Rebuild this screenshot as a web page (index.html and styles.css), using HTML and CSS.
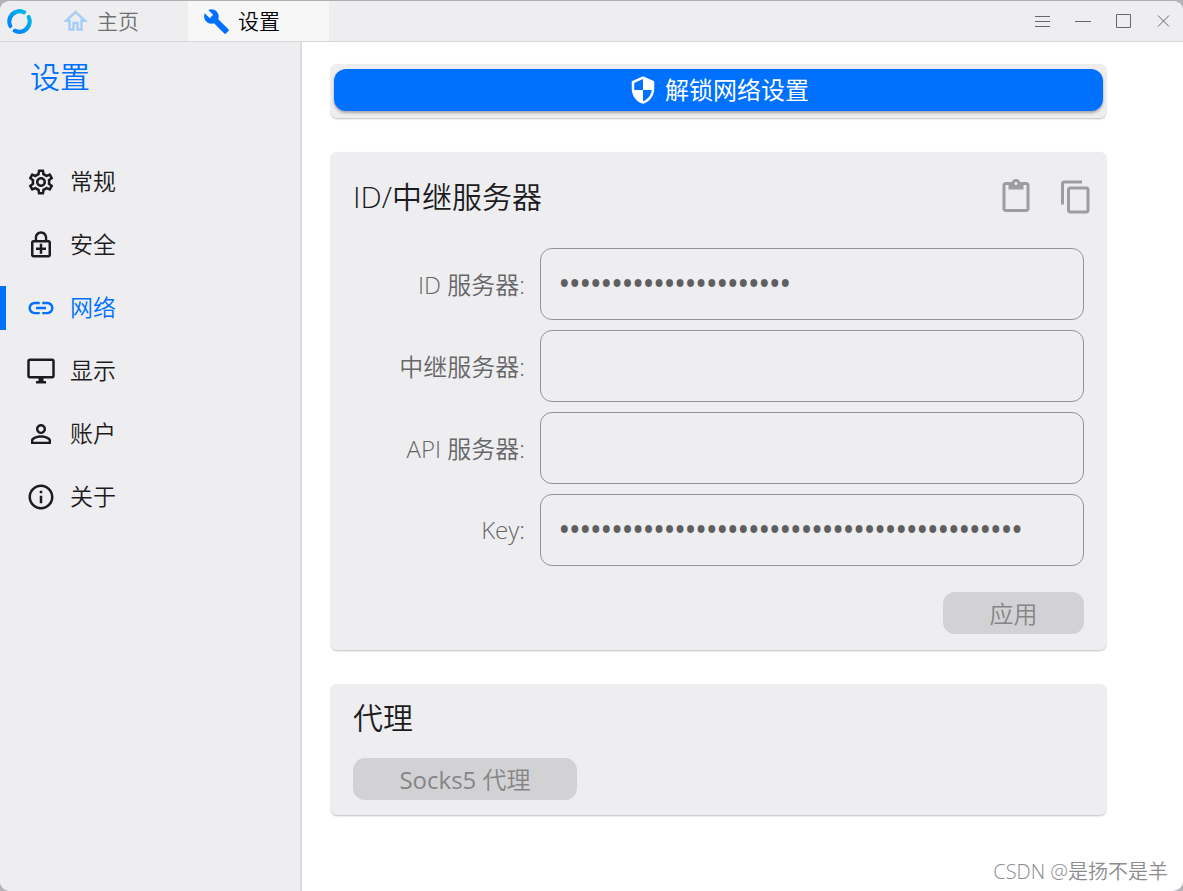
FILE: index.html
```
<!DOCTYPE html>
<html lang="zh-CN">

<head>
    <meta charset="UTF-8">
    <meta name="viewport" content="width=device-width, initial-scale=1.0">
    <title>设置</title>
    <link rel="stylesheet" href="styles.css">
</head>

<body>
    <div class="window">
        <header class="titlebar">
            <svg class="logo" viewBox="0 0 24 24" aria-hidden="true">
                <defs>
                    <linearGradient id="logoFill" x1="1" y1="0" x2="0" y2="1">
                        <stop offset="0" stop-color="#00c8e0" />
                        <stop offset="1" stop-color="#0071ff" />
                    </linearGradient>
                </defs>
                <path d="M17.8 1.6A11.8 11.8 0 0 0 1.6 17.4Q2.2 18.8 3.6 18.2L4.8 17.4Q5.4 16.8 5 15.6A8 8 0 0 1 15.8 5Q16.8 5.4 17.4 4.8L18.4 3.6Q19 2.2 17.8 1.6ZM22.4 6.6A11.8 11.8 0 0 1 6.2 22.4Q5 21.8 5.6 20.4L6.6 19.2Q7.2 18.6 8.2 19A8 8 0 0 0 19 8.4Q18.6 7.2 19.2 6.6L20.4 5.8Q21.8 5.2 22.4 6.6Z" fill="url(#logoFill)" />
            </svg>
            <nav class="tabs">
                <a class="tab" href="#">
                    <svg class="tab-icon home-icon" viewBox="0 0 27 27" aria-hidden="true">
                        <path d="M13.5 4L4 12.8H7.5V21.5H11.5V15H15.5V21.5H19.5V12.8H23Z" />
                    </svg>
                    <span>主页</span>
                </a>
                <a class="tab active" href="#">
                    <svg class="tab-icon" viewBox="0 0 24 24" aria-hidden="true">
                        <path d="M22.7 19l-9.1-9.1c.9-2.3.4-5-1.5-6.9-2-2-5-2.4-7.4-1.3L9 6 6 9 1.6 4.7C.4 7.1.9 10.1 2.9 12.1c1.9 1.9 4.6 2.4 6.9 1.5l9.1 9.1c.4.4 1 .4 1.4 0l2.3-2.3c.5-.4.5-1.1.1-1.4z" />
                    </svg>
                    <span>设置</span>
                </a>
            </nav>
            <div class="controls">
                <button class="control" aria-label="菜单">
                    <svg viewBox="0 0 16 16"><path d="M0 3.5H15M0 8.5H15M0 13.5H15" /></svg>
                </button>
                <button class="control" aria-label="最小化">
                    <svg viewBox="0 0 16 16"><path d="M0 8.5H16" /></svg>
                </button>
                <button class="control" aria-label="最大化">
                    <svg viewBox="0 0 16 16"><path d="M1.5 1.5H15.5V14.5H1.5Z" /></svg>
                </button>
                <button class="control" aria-label="关闭">
                    <svg viewBox="0 0 16 16"><path d="M3 2.5L14 13.5M14 2.5L3 13.5" /></svg>
                </button>
            </div>
        </header>

        <div class="layout">
            <aside class="sidebar">
                <h1>设置</h1>
                <nav class="menu">
                    <a class="menu-item" href="#">
                        <svg viewBox="0 0 24 24"><path d="M19.43 12.98c.04-.32.07-.64.07-.98 0-.34-.03-.66-.07-.98l2.11-1.65c.19-.15.24-.42.12-.64l-2-3.46c-.09-.16-.26-.25-.44-.25-.06 0-.12.01-.17.03l-2.49 1c-.52-.4-1.08-.73-1.69-.98l-.38-2.65C14.46 2.18 14.25 2 14 2h-4c-.25 0-.46.18-.49.42l-.38 2.65c-.61.25-1.17.59-1.69.98l-2.49-1c-.06-.02-.12-.03-.18-.03-.17 0-.34.09-.43.25l-2 3.46c-.13.22-.07.49.12.64l2.11 1.65c-.04.32-.07.65-.07.98 0 .33.03.66.07.98l-2.11 1.65c-.19.15-.24.42-.12.64l2 3.46c.09.16.26.25.44.25.06 0 .12-.01.17-.03l2.49-1c.52.4 1.08.73 1.69.98l.38 2.65c.03.24.24.42.49.42h4c.25 0 .46-.18.49-.42l.38-2.65c.61-.25 1.17-.59 1.69-.98l2.49 1c.06.02.12.03.18.03.17 0 .34-.09.43-.25l2-3.46c.12-.22.07-.49-.12-.64l-2.11-1.65zm-1.98-1.71c.04.31.05.52.05.73 0 .21-.02.43-.05.73l-.14 1.13.89.7 1.08.84-.7 1.21-1.27-.51-1.04-.42-.9.68c-.43.32-.84.56-1.25.73l-1.06.43-.16 1.13-.2 1.35h-1.4l-.19-1.35-.16-1.13-1.06-.43c-.43-.18-.83-.41-1.23-.71l-.91-.7-1.06.43-1.27.51-.7-1.21 1.08-.84.89-.7-.14-1.13c-.03-.31-.05-.54-.05-.74s.02-.43.05-.73l.14-1.13-.89-.7-1.08-.84.7-1.21 1.27.51 1.04.42.9-.68c.43-.32.84-.56 1.25-.73l1.06-.43.16-1.13.2-1.35h1.39l.19 1.35.16 1.13 1.06.43c.43.18.83.41 1.23.71l.91.7 1.06-.43 1.27-.51.7 1.21-1.07.85-.89.7.14 1.13zM12 8c-2.21 0-4 1.79-4 4s1.79 4 4 4 4-1.79 4-4-1.79-4-4-4zm0 6c-1.1 0-2-.9-2-2s.9-2 2-2 2 .9 2 2-.9 2-2 2z" /></svg>
                        <span>常规</span>
                    </a>
                    <a class="menu-item" href="#">
                        <svg viewBox="0 0 24 24"><path d="M18 8h-1V6c0-2.76-2.24-5-5-5S7 3.24 7 6v2H6c-1.1 0-2 .9-2 2v10c0 1.1.9 2 2 2h12c1.1 0 2-.9 2-2V10c0-1.1-.9-2-2-2zM8.9 6c0-1.71 1.39-3.1 3.1-3.1s3.1 1.39 3.1 3.1v2H8.9V6zM18 20H6V10h12v10zm-7-1h2v-3h3v-2h-3v-3h-2v3H8v2h3z" /></svg>
                        <span>安全</span>
                    </a>
                    <a class="menu-item active" href="#">
                        <svg viewBox="0 0 24 24"><path d="M3.9 12c0-1.71 1.39-3.1 3.1-3.1h4V7H7c-2.76 0-5 2.24-5 5s2.24 5 5 5h4v-1.9H7c-1.71 0-3.1-1.39-3.1-3.1zM8 13h8v-2H8v2zm9-6h-4v1.9h4c1.71 0 3.1 1.39 3.1 3.1s-1.39 3.1-3.1 3.1h-4V17h4c2.76 0 5-2.24 5-5s-2.24-5-5-5z" /></svg>
                        <span>网络</span>
                    </a>
                    <a class="menu-item" href="#">
                        <svg viewBox="0 0 24 24"><path d="M21 2H3c-1.1 0-2 .9-2 2v12c0 1.1.9 2 2 2h7v2H8v2h8v-2h-2v-2h7c1.1 0 2-.9 2-2V4c0-1.1-.9-2-2-2zm0 14H3V4h18v12z" /></svg>
                        <span>显示</span>
                    </a>
                    <a class="menu-item" href="#">
                        <svg viewBox="0 0 24 24"><path d="M12 5.9c1.16 0 2.1.94 2.1 2.1s-.94 2.1-2.1 2.1S9.9 9.16 9.9 8s.94-2.1 2.1-2.1m0 9c2.97 0 6.1 1.46 6.1 2.1v1.1H5.9V17c0-.64 3.13-2.1 6.1-2.1M12 4C9.79 4 8 5.79 8 8s1.79 4 4 4 4-1.79 4-4-1.79-4-4-4zm0 9c-2.67 0-8 1.34-8 4v3h16v-3c0-2.66-5.33-4-8-4z" /></svg>
                        <span>账户</span>
                    </a>
                    <a class="menu-item" href="#">
                        <svg viewBox="0 0 24 24"><path d="M11 7h2v2h-2zm0 4h2v6h-2zm1-9C6.48 2 2 6.48 2 12s4.48 10 10 10 10-4.48 10-10S17.52 2 12 2zm0 18c-4.41 0-8-3.59-8-8s3.59-8 8-8 8 3.59 8 8-3.59 8-8 8z" /></svg>
                        <span>关于</span>
                    </a>
                </nav>
            </aside>

            <main class="content">
                <section class="card unlock-card">
                    <button class="unlock-button">
                        <svg viewBox="0 0 24 24" aria-hidden="true"><path d="M12 1L3 5v6c0 5.55 3.84 10.74 9 12 5.16-1.26 9-6.45 9-12V5l-9-4zm0 10.99h7c-.53 4.12-3.28 7.79-7 8.94V12H5V6.3l7-3.11v8.8z" /></svg>
                        <span>解锁网络设置</span>
                    </button>
                </section>

                <section class="card server-card">
                    <div class="card-head">
                        <h2>ID/中继服务器</h2>
                        <div class="card-actions">
                            <button class="icon-button" aria-label="粘贴">
                                <svg viewBox="0 0 24 24"><path d="M19 2h-4.18C14.4.84 13.3 0 12 0c-1.3 0-2.4.84-2.82 2H5c-1.1 0-2 .9-2 2v16c0 1.1.9 2 2 2h14c1.1 0 2-.9 2-2V4c0-1.1-.9-2-2-2zm-7 0c.55 0 1 .45 1 1s-.45 1-1 1-1-.45-1-1 .45-1 1-1zm7 18H5V4h2v3h10V4h2v16z" /></svg>
                            </button>
                            <button class="icon-button" aria-label="复制">
                                <svg viewBox="0 0 24 24"><path d="M16 1H4c-1.1 0-2 .9-2 2v14h2V3h12V1zm3 4H8c-1.1 0-2 .9-2 2v14c0 1.1.9 2 2 2h11c1.1 0 2-.9 2-2V7c0-1.1-.9-2-2-2zm0 16H8V7h11v14z" /></svg>
                            </button>
                        </div>
                    </div>
                    <form class="server-form">
                        <label for="idServer">ID 服务器:</label>
                        <input id="idServer" type="password" value="1234567890123456789012">
                        <label for="relayServer">中继服务器:</label>
                        <input id="relayServer" type="password">
                        <label for="apiServer">API 服务器:</label>
                        <input id="apiServer" type="password">
                        <label for="key">Key:</label>
                        <input id="key" type="password" value="12345678901234567890123456789012345678901234">
                    </form>
                    <div class="card-foot">
                        <button class="gray-button apply-button" disabled>应用</button>
                    </div>
                </section>

                <section class="card proxy-card">
                    <h2>代理</h2>
                    <button class="gray-button proxy-button" disabled><b>Socks5</b> 代理</button>
                </section>
            </main>
        </div>
        <div class="watermark">CSDN @是扬不是羊</div>
    </div>
</body>

</html>
```
FILE: styles.css
```
* {
    box-sizing: border-box;
}

body {
    margin: 0;
    background-color: #b4b4b8;
    font-family: 'Open Sans', 'Noto Sans CJK SC', sans-serif;
    font-weight: 350;
    color: #1c1c1e;
}

button,
input {
    font-family: inherit;
    font-weight: inherit;
}

h1,
h2 {
    margin: 0;
    font-size: 30px;
    line-height: 40px;
    font-weight: 350;
}

svg {
    display: block;
    fill: currentColor;
}

a {
    color: inherit;
    text-decoration: none;
}

.window {
    position: relative;
    display: flex;
    flex-direction: column;
    min-height: 100vh;
    background-color: white;
    border-top: 1px solid #b0b0b2;
    border-radius: 10px;
    overflow: hidden;
}

/* title bar */
.titlebar {
    display: flex;
    align-items: center;
    height: 41px;
    padding: 0 8px 0 7px;
    background-color: #eeeef0;
    border-bottom: 1px solid #d6d6d8;
}

.logo {
    width: 25px;
    height: 25px;
}

.tabs {
    display: flex;
    align-self: stretch;
    margin-left: 15px;
}

.tab {
    display: flex;
    align-items: center;
    gap: 8px;
    width: 141px;
    padding-left: 15px;
    font-size: 21px;
    color: #707072;
}

.tab.active {
    background-color: #f7f7f8;
    color: #000;
}

.tab-icon {
    width: 27px;
    height: 27px;
    color: #0071ff;
}

.home-icon {
    fill: none;
    stroke: #a5cdf5;
    stroke-width: 2.4;
}

/* the CJK glyphs sit low in their line box */
.tab span,
.menu-item span,
.unlock-button span {
    padding-bottom: 3px;
}

.controls {
    display: flex;
    gap: 16px;
    margin-left: auto;
}

.control {
    padding: 4px;
    border: none;
    background: none;
    cursor: pointer;
}

.control svg {
    width: 16px;
    height: 16px;
    fill: none;
    stroke: #68686a;
}

/* sidebar */
.layout {
    display: flex;
    flex: 1;
}

.sidebar {
    width: 302px;
    flex-shrink: 0;
    background-color: #eeeef0;
    border-right: 2px solid #dcdcde;
}

.sidebar h1 {
    padding: 15px 0 0 30px;
    color: #0071ff;
}

.menu {
    margin-top: 53px;
}

.menu-item {
    position: relative;
    display: flex;
    align-items: center;
    gap: 14px;
    height: 63px;
    padding-left: 26px;
    font-size: 23px;
}

.menu-item svg {
    width: 30px;
    height: 30px;
}

.menu-item.active {
    color: #0071ff;
}

.menu-item.active::before {
    content: '';
    position: absolute;
    left: 0;
    width: 6px;
    height: 44px;
    background-color: #0071ff;
}

/* cards */
.content {
    display: flex;
    flex: 1;
    flex-direction: column;
    gap: 34px;
    padding: 22px 77px 22px 29px;
}

.card {
    padding: 0 22px;
    background-color: #eeeef0;
    border-radius: 6px;
    box-shadow: 0 1px 2px rgba(0, 0, 0, 0.25);
}

.unlock-card {
    padding: 5px 3px 7px;
}

.unlock-button {
    display: flex;
    align-items: center;
    justify-content: center;
    gap: 7px;
    width: 100%;
    height: 42px;
    padding: 0;
    border: none;
    border-radius: 12px;
    background-color: #0071ff;
    box-shadow: 0 2px 3px rgba(0, 0, 0, 0.3);
    color: white;
    font-size: 24px;
    font-weight: 400;
    cursor: pointer;
}

.unlock-button svg {
    width: 30px;
    height: 30px;
}

.card-head {
    display: flex;
    align-items: center;
    justify-content: space-between;
    height: 90px;
    margin-right: -10px;
}

.card-actions {
    display: flex;
    gap: 24px;
}

.icon-button {
    padding: 0;
    border: none;
    background: none;
    color: #9e9ea0;
    cursor: pointer;
}

.icon-button svg {
    width: 36px;
    height: 36px;
}

.server-form {
    display: grid;
    grid-template-columns: 172px 1fr;
    gap: 10px 15px;
    align-items: center;
    margin-top: 6px;
}

.server-form label {
    padding-bottom: 2px;
    font-size: 24px;
    color: #666668;
    text-align: right;
}

.server-form input {
    width: 100%;
    height: 72px;
    padding: 0 18px 3px;
    border: 1px solid #939395;
    border-radius: 12px;
    background: none;
    color: #5f5f61;
    font-size: 28px;
    font-weight: 600;
    outline: none;
}

.card-foot {
    display: flex;
    justify-content: flex-end;
    padding: 26px 0 16px;
}

.gray-button {
    height: 42px;
    padding: 0 0 2px;
    border: none;
    border-radius: 12px;
    background-color: #d2d2d4;
    color: #858587;
    font-size: 24px;
}

.gray-button b {
    font-weight: 500;
}

.apply-button {
    width: 141px;
}

.proxy-card {
    padding-top: 14px;
    padding-bottom: 15px;
}

.proxy-button {
    width: 224px;
    margin-top: 20px;
}

.watermark {
    position: absolute;
    right: 15px;
    bottom: 6px;
    font-size: 20px;
    color: #8c8c8e;
}
```
